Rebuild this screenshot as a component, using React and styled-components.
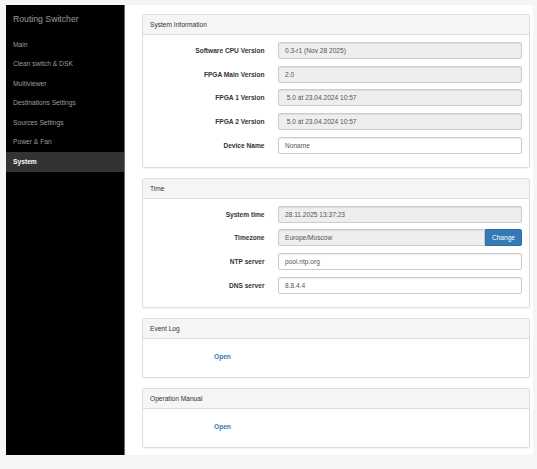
import React from "react";
import styled, { createGlobalStyle } from "styled-components";

const GlobalStyle = createGlobalStyle`
  * {
    box-sizing: border-box;
  }
  body {
    margin: 0;
    background: #f5f5f5;
    font-family: "Liberation Sans", Arial, sans-serif;
    color: #333;
  }
`;

const menu = [
  "Main",
  "Clean switch & DSK",
  "Multiviewer",
  "Destinations Settings",
  "Sources Settings",
  "Power & Fan",
  "System",
];

const Page = styled.div`
  padding: 5px 4px 0 6px;
`;

const Frame = styled.div`
  display: flex;
  background: #fff;
  min-height: 450px;
`;

const Sidebar = styled.nav`
  width: 119px;
  flex-shrink: 0;
  background: #000;
  border-right: 1px solid #6a6a6a;
`;

const Brand = styled.div`
  height: 29.5px;
  padding: 0 7px;
  line-height: 29px;
  font-size: 8.7px;
  color: #9d9d9d;
`;

const NavItem = styled.div`
  height: 19.6px;
  line-height: 19.6px;
  padding: 0 7px;
  font-size: 6.7px;
  color: ${({ active }) => (active ? "#fff" : "#9d9d9d")};
  font-weight: ${({ active }) => (active ? "bold" : "normal")};
  background: ${({ active }) => (active ? "#333" : "transparent")};
`;

const Content = styled.main`
  flex: 1;
  padding: 9px 3px 5px 17px;
`;

const Panel = styled.section`
  border: 1px solid #ddd;
  border-radius: 2px;
  background: #fff;
  box-shadow: 0 1px 1px rgba(0, 0, 0, 0.05);
  margin-bottom: 10px;

  &:last-child {
    margin-bottom: 0;
  }
`;

const PanelHeading = styled.div`
  height: 20px;
  line-height: 19px;
  padding: 0 7px;
  font-size: 6.6px;
  background: #f5f5f5;
  border-bottom: 1px solid #ddd;
  border-radius: 2px 2px 0 0;
`;

const PanelBody = styled.div`
  padding: 7px 7px 0;
`;

const FormRow = styled.div`
  display: grid;
  grid-template-columns: 114.5px 1fr;
  column-gap: 13.5px;
  align-items: center;
  margin-bottom: 6.7px;

  &:last-child {
    margin-bottom: 13px;
  }
`;

const Label = styled.label`
  text-align: right;
  font-size: 6.6px;
  font-weight: bold;
  color: #333;
`;

const Field = styled.div`
  display: flex;
  height: 17px;
`;

const Input = styled.div`
  flex: 1;
  height: 17px;
  line-height: 15px;
  padding: 0 6px;
  font-size: 6.6px;
  color: #555;
  white-space: pre;
  background: ${({ readOnly }) => (readOnly ? "#eee" : "#fff")};
  border: 1px solid #ccc;
  border-radius: ${({ joined }) => (joined ? "2px 0 0 2px" : "2px")};
  box-shadow: inset 0 1px 1px rgba(0, 0, 0, 0.075);
`;

const Button = styled.button`
  width: 37px;
  height: 17px;
  padding: 0;
  font-family: inherit;
  font-size: 6.6px;
  color: #fff;
  background: #337ab7;
  border: 1px solid #2e6da4;
  border-radius: 0 2px 2px 0;
`;

const LinkRow = styled.div`
  height: 17px;
  line-height: 15px;
  padding-left: 64px;
  margin-bottom: 14px;
`;

const Link = styled.a`
  font-size: 6.6px;
  font-weight: bold;
  color: #337ab7;
  text-decoration: none;
`;

const Row = ({ label, value, readOnly, action }) => (
  <FormRow>
    <Label>{label}</Label>
    <Field>
      <Input readOnly={readOnly} joined={!!action}>
        {value}
      </Input>
      {action && <Button>{action}</Button>}
    </Field>
  </FormRow>
);

const App = () => (
  <>
    <GlobalStyle />
    <Page>
      <Frame>
        <Sidebar>
          <Brand>Routing Switcher</Brand>
          {menu.map((item) => (
            <NavItem key={item} active={item === "System"}>
              {item}
            </NavItem>
          ))}
        </Sidebar>
        <Content>
          <Panel>
            <PanelHeading>System Information</PanelHeading>
            <PanelBody>
              <Row label="Software CPU Version" value="0.3-r1 (Nov 28 2025)" readOnly />
              <Row label="FPGA Main Version" value="2.0" readOnly />
              <Row label="FPGA 1 Version" value=" 5.0 at 23.04.2024 10:57" readOnly />
              <Row label="FPGA 2 Version" value=" 5.0 at 23.04.2024 10:57" readOnly />
              <Row label="Device Name" value="Noname" />
            </PanelBody>
          </Panel>
          <Panel>
            <PanelHeading>Time</PanelHeading>
            <PanelBody>
              <Row label="System time" value="28.11.2025 13:37:23" readOnly />
              <Row label="Timezone" value="Europe/Moscow" readOnly action="Change" />
              <Row label="NTP server" value="pool.ntp.org" />
              <Row label="DNS server" value="8.8.4.4" />
            </PanelBody>
          </Panel>
          <Panel>
            <PanelHeading>Event Log</PanelHeading>
            <PanelBody>
              <LinkRow>
                <Link href="#">Open</Link>
              </LinkRow>
            </PanelBody>
          </Panel>
          <Panel>
            <PanelHeading>Operation Manual</PanelHeading>
            <PanelBody>
              <LinkRow>
                <Link href="#">Open</Link>
              </LinkRow>
            </PanelBody>
          </Panel>
        </Content>
      </Frame>
    </Page>
  </>
);

export default App;
